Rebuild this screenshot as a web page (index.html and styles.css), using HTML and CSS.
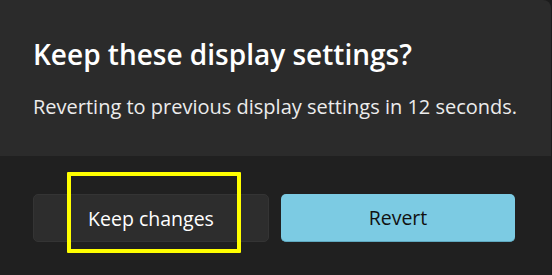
FILE: index.html
```html
<!DOCTYPE html>
<html lang="en">
<head>
  <meta charset="UTF-8" />
  <title>Keep these display settings?</title>
  <link rel="stylesheet" href="styles.css">
</head>
<body>

  <div class="dialog">
    <section class="dialog-body">
      <h1>Keep these display settings?</h1>
      <p>Reverting to previous display settings in 12 seconds.</p>
    </section>

    <footer class="dialog-footer">
      <button class="btn">Keep changes</button>
      <button class="btn btn-accent">Revert</button>
    </footer>
  </div>

  <!-- highlight drawn on top of the screenshot -->
  <span class="highlight"></span>

</body>
</html>
```

FILE: styles.css
```css
html, body {
  margin: 0;
  padding: 0;
  height: 100%;
  background: #1c1c1c;
  font-family: "Open Sans", "Noto Sans", sans-serif;
  overflow: hidden;
  position: relative;
}

.dialog {
  width: 551px;
  height: 283px;
  border-radius: 0 8px 8px 0;
  overflow: hidden;
  display: flex;
  flex-direction: column;
}

.dialog-body {
  height: 156px;
  box-sizing: border-box;
  padding: 37px 20px 0 33px;
  background: #2b2b2b;
}

.dialog-body h1 {
  margin: 0;
  font-size: 28px;
  font-weight: 600;
  color: #ffffff;
  line-height: 34px;
  white-space: nowrap;
}

.dialog-body p {
  margin: 24px 0 0;
  font-size: 20px;
  color: #ececec;
  line-height: 24px;
  white-space: nowrap;
}

.dialog-footer {
  flex: 1;
  display: flex;
  gap: 12px;
  padding: 38px 36px 0 33px;
  background: #202020;
}

.btn {
  flex: 1;
  height: 48px;
  border-radius: 5px;
  font-family: inherit;
  font-size: 19.5px;
  cursor: pointer;
  border: 1px solid #343434;
  background: #2d2d2d;
  color: #ffffff;
}

.btn-accent {
  border: none;
  border-bottom: 1px solid #5fa9c0;
  background: #7ccbe3;
  color: #111111;
}

.highlight {
  position: absolute;
  left: 67px;
  top: 172px;
  width: 174px;
  height: 81px;
  box-sizing: border-box;
  border: 4px solid #ffff00;
  border-radius: 1px;
}
```
